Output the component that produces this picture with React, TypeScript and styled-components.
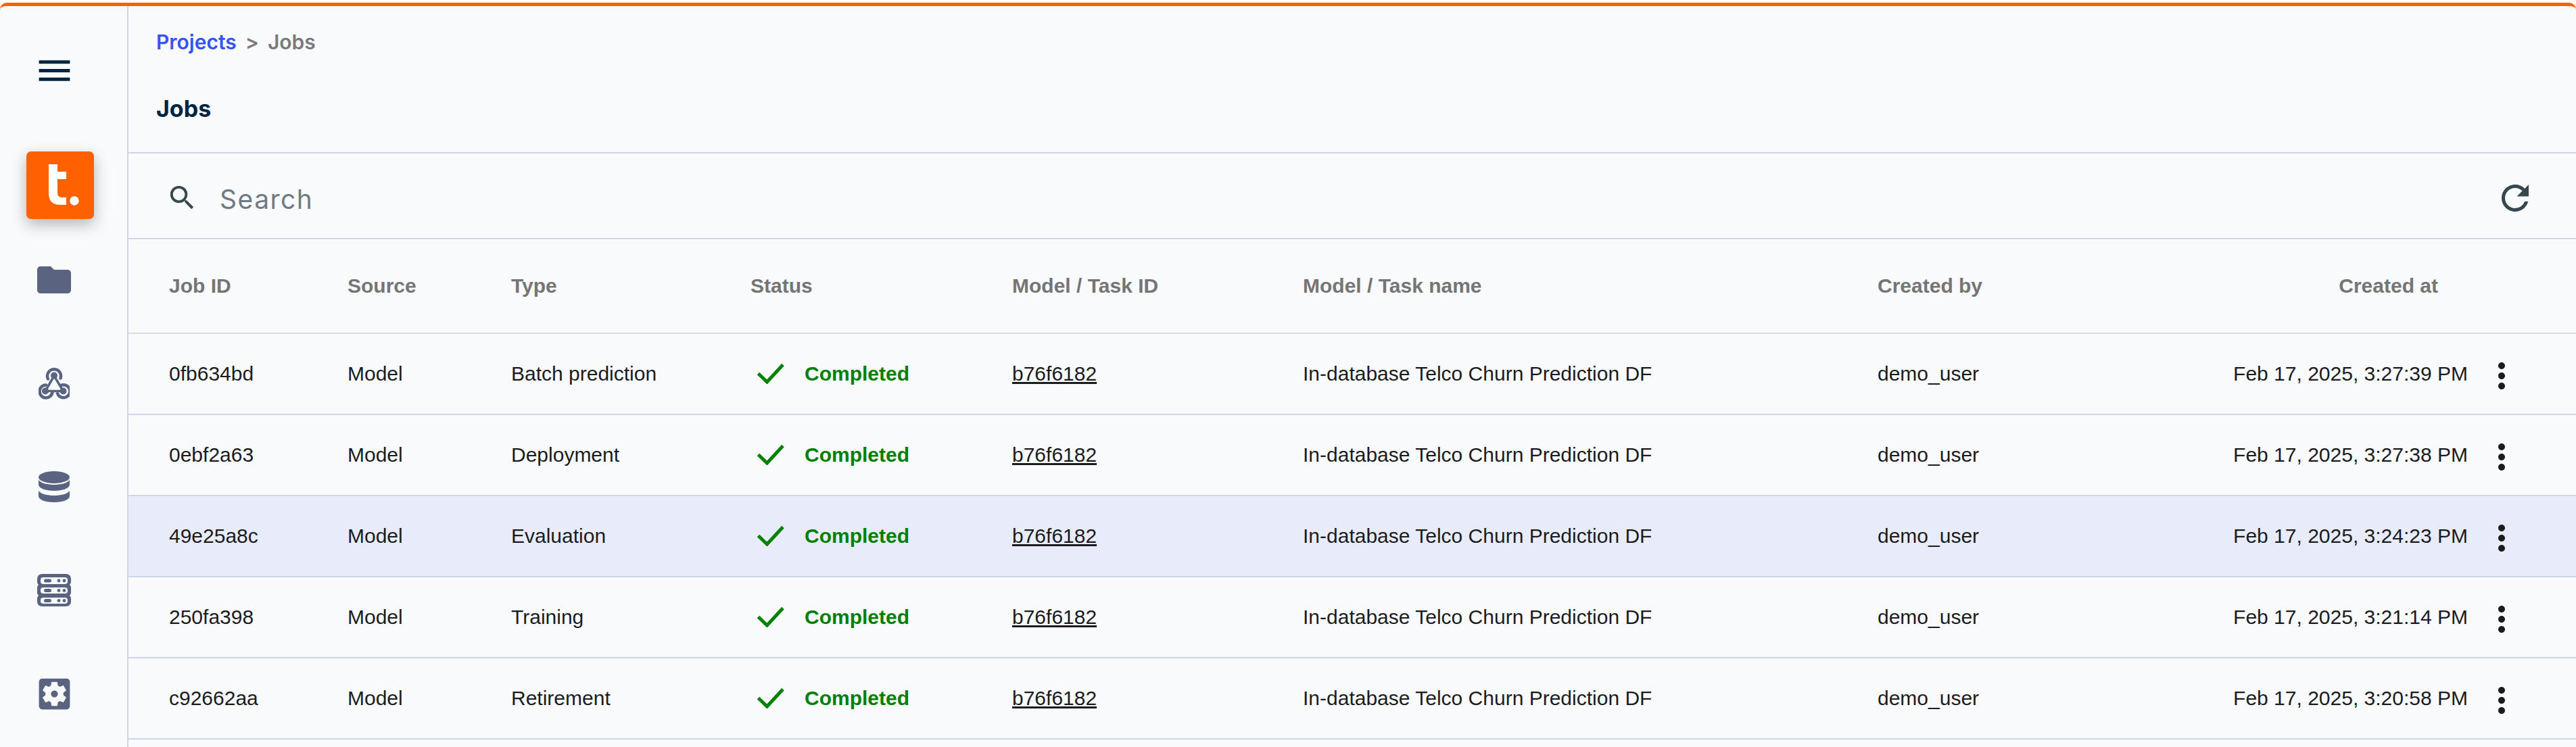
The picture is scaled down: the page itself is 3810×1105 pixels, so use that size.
import React from 'react'
import styled, { createGlobalStyle } from 'styled-components'
import { MdMenu, MdSearch, MdRefresh, MdMoreVert, MdFolder, MdSettingsApplications } from 'react-icons/md'

const _BORDER = '#d0d6ea'
const _BG = '#f8fafc'
const _ICON = '#5a6480'
const _NAVY = '#00243f'

const GlobalStyle = createGlobalStyle`
	html, body {
		margin: 0;
		padding: 0;
		background: #fff;
	}
	* {
		box-sizing: border-box;
	}
`

const Page = styled.div`
	width: 3810px;
	height: 1105px;
	padding-top: 4px;
	overflow: hidden;
`

const Frame = styled.div`
	display: flex;
	height: 100%;
	border-top: 5px solid #ff6000;
	border-radius: 10px 10px 0 0;
	background: ${_BG};
`

const Sidebar = styled.nav`
	display: flex;
	flex-direction: column;
	align-items: center;
	width: 190px;
	flex-shrink: 0;
	border-right: 2px solid ${_BORDER};
	padding: 63px 28px 0 0;
`

const NavIcon = styled.div<{ $top: number }>`
	display: flex;
	align-items: center;
	justify-content: center;
	width: 64px;
	height: 64px;
	margin-top: ${p => p.$top}px;
	color: ${_ICON};
`

const MenuBtn = styled(NavIcon)`
	color: ${_NAVY};
`

const Logo = styled.div`
	display: flex;
	align-items: center;
	justify-content: center;
	width: 100px;
	height: 100px;
	flex-shrink: 0;
	margin: 88px 0 0 18px;
	border-radius: 7px;
	background: #ff6000;
	box-shadow: 0 8px 22px rgba(0, 0, 0, 0.28);
`

const Main = styled.main`
	flex: 1;
	min-width: 0;
	display: flex;
	flex-direction: column;
`

const Head = styled.header`
	height: 218px;
	padding: 35px 0 0 41px;
	border-bottom: 2px solid ${_BORDER};
`

const Crumbs = styled.div`
	display: flex;
	align-items: center;
	gap: 13px;
	height: 36px;
	font-family: Inter, sans-serif;
	font-size: 30px;
	font-weight: 600;
	color: #7a7a7a;
`

const CrumbLink = styled.a`
	color: #3653f5;
`

const Title = styled.h1`
	margin: 61px 0 0;
	font-family: Inter, sans-serif;
	font-size: 34px;
	line-height: 40px;
	font-weight: 700;
	color: ${_NAVY};
`

const SearchBar = styled.div`
	display: flex;
	align-items: center;
	height: 127px;
	padding: 6px 60px 0 56px;
	border-bottom: 2px solid ${_BORDER};
	color: #37474f;
`

const SearchText = styled.span`
	flex: 1;
	margin: 4px 0 0 32px;
	font-family: Inter, sans-serif;
	font-size: 39px;
	letter-spacing: 1.5px;
	color: #6f7a85;
`

const Row = styled.div<{ $head?: boolean; $active?: boolean }>`
	display: grid;
	grid-template-columns: 264px 242px 354px 387px 430px 850px 600px 273px 1fr;
	align-items: center;
	height: ${p => (p.$head ? '140px' : '120px')};
	padding-left: 60px;
	border-bottom: 2px solid ${p => (p.$head ? '#d9dce3' : _BORDER)};
	background: ${p => (p.$active ? '#e8ecfa' : 'transparent')};
	font-family: 'Liberation Sans', Arial, sans-serif;
	font-size: 30px;
	font-weight: ${p => (p.$head ? 700 : 400)};
	color: ${p => (p.$head ? '#757575' : '#1c1c1e')};
`

const Cell = styled.div`
	white-space: nowrap;
`

const RightCell = styled(Cell)`
	display: flex;
	justify-content: flex-end;
`

const HeadRight = styled(RightCell)`
	padding-right: 44px;
`

const Status = styled.div`
	display: flex;
	align-items: center;
	gap: 30px;
	padding-left: 10px;
	font-weight: 700;
	color: #008000;
`

const TaskLink = styled.a`
	color: inherit;
	text-decoration: underline;
`

const More = styled.div`
	display: flex;
	align-items: center;
	padding: 6px 0 0 20px;
`

const rows = [
	['0fb634bd', 'Batch prediction', 'Feb 17, 2025, 3:27:39 PM'],
	['0ebf2a63', 'Deployment', 'Feb 17, 2025, 3:27:38 PM'],
	['49e25a8c', 'Evaluation', 'Feb 17, 2025, 3:24:23 PM'],
	['250fa398', 'Training', 'Feb 17, 2025, 3:21:14 PM'],
	['c92662aa', 'Retirement', 'Feb 17, 2025, 3:20:58 PM'],
]

const Check = () => (
	<svg width="40" height="30" viewBox="0 0 40 30" fill="none">
		<path d="M1.5 14.5 L14.5 27 L38 1.5" stroke="#008000" strokeWidth="5" />
	</svg>
)

const WebhookIcon = () => (
	<svg width="46" height="47" viewBox="0 0 46 47" fill="none" stroke={_ICON} strokeWidth="4.5" strokeLinecap="round">
		<path d="M14 16.5A10 10 0 1 1 32.5 15.5" />
		<path d="M11 25.5A9.5 9.5 0 1 0 20.5 36" />
		<path d="M33 26A9.5 9.5 0 1 1 28 38" />
		<path d="M23 12L10 34.5H36.5L23 12" strokeWidth="3.5" />
		<g fill={_ICON} stroke="none">
			<circle cx="23" cy="11.5" r="5" />
			<circle cx="10" cy="34.5" r="5" />
			<circle cx="36.5" cy="34.5" r="5" />
		</g>
	</svg>
)

const DatabaseIcon = () => (
	<svg width="46" height="46" viewBox="0 0 46 46" fill={_ICON}>
		<ellipse cx="23" cy="9" rx="23" ry="9" />
		<path d="M0 13c4 5 13 7 23 7s19-2 23-7v7c0 5-10 9-23 9S0 25 0 20z" />
		<path d="M0 29c4 5 13 7 23 7s19-2 23-7v8c0 5-10 9-23 9S0 42 0 37z" />
	</svg>
)

const ServerIcon = () => (
	<svg width="50" height="48" viewBox="0 0 50 48" fill={_ICON}>
		<path fillRule="evenodd" d="M7 0h36a7 7 0 0 1 7 7v4a6 6 0 0 1-2 5 6 6 0 0 1 2 4v8a6 6 0 0 1-2 4 6 6 0 0 1 2 5v4a7 7 0 0 1-7 7H7a7 7 0 0 1-7-7v-4a6 6 0 0 1 2-5 6 6 0 0 1-2-4v-8a6 6 0 0 1 2-4 6 6 0 0 1-2-5V7a7 7 0 0 1 7-7zM9 5a4 4 0 0 0-4 4v2a4 4 0 0 0 4 4h32a4 4 0 0 0 4-4V9a4 4 0 0 0-4-4zM9 20a4 4 0 0 0-4 4v1a4 4 0 0 0 4 4h32a4 4 0 0 0 4-4v-1a4 4 0 0 0-4-4zM9 35a4 4 0 0 0-4 4v1a4 4 0 0 0 4 4h32a4 4 0 0 0 4-4v-1a4 4 0 0 0-4-4z" />
		<rect x="10" y="7.5" width="11" height="5" rx="2.5" />
		<rect x="10" y="22" width="11" height="5" rx="2.5" />
		<rect x="10" y="37" width="11" height="5" rx="2.5" />
		<circle cx="32" cy="10" r="2.4" /><circle cx="40" cy="10" r="2.4" />
		<circle cx="32" cy="24.5" r="2.4" /><circle cx="40" cy="24.5" r="2.4" />
		<circle cx="32" cy="39.5" r="2.4" /><circle cx="40" cy="39.5" r="2.4" />
	</svg>
)

const LogoMark = () => (
	<svg width="100" height="100" viewBox="0 0 100 100" fill="#fff">
		<path d="M33 19h13v11h13v11H46v19c0 6 2 8 8 8h5v11h-8c-13 0-18-6-18-18z" />
		<circle cx="71" cy="73" r="6.7" />
	</svg>
)

const App = () => {
	return (
		<Page>
			<GlobalStyle />
			<Frame>
				<Sidebar>
					<MenuBtn $top={0}><MdMenu size={61} /></MenuBtn>
					<Logo><LogoMark /></Logo>
					<NavIcon $top={58}><MdFolder size={60} /></NavIcon>
					<NavIcon $top={89}><WebhookIcon /></NavIcon>
					<NavIcon $top={89}><DatabaseIcon /></NavIcon>
					<NavIcon $top={89}><ServerIcon /></NavIcon>
					<NavIcon $top={89}><MdSettingsApplications size={61} /></NavIcon>
				</Sidebar>
				<Main>
					<Head>
						<Crumbs>
							<CrumbLink>Projects</CrumbLink>
							<span>&gt;</span>
							<span>Jobs</span>
						</Crumbs>
						<Title>Jobs</Title>
					</Head>
					<SearchBar>
						<MdSearch size={47} />
						<SearchText>Search</SearchText>
						<MdRefresh size={60} />
					</SearchBar>
					<Row $head>
						<Cell>Job ID</Cell>
						<Cell>Source</Cell>
						<Cell>Type</Cell>
						<Cell>Status</Cell>
						<Cell>Model / Task ID</Cell>
						<Cell>Model / Task name</Cell>
						<Cell>Created by</Cell>
						<HeadRight>Created at</HeadRight>
						<div />
					</Row>
					{rows.map(([id, type, date], i) => (
						<Row key={id} $active={i === 2}>
							<Cell>{id}</Cell>
							<Cell>Model</Cell>
							<Cell>{type}</Cell>
							<Status><Check />Completed</Status>
							<Cell><TaskLink>b76f6182</TaskLink></Cell>
							<Cell>In-database Telco Churn Prediction DF</Cell>
							<Cell>demo_user</Cell>
							<RightCell>{date}</RightCell>
							<More><MdMoreVert size={60} /></More>
						</Row>
					))}
				</Main>
			</Frame>
		</Page>
	)
}

export default App
